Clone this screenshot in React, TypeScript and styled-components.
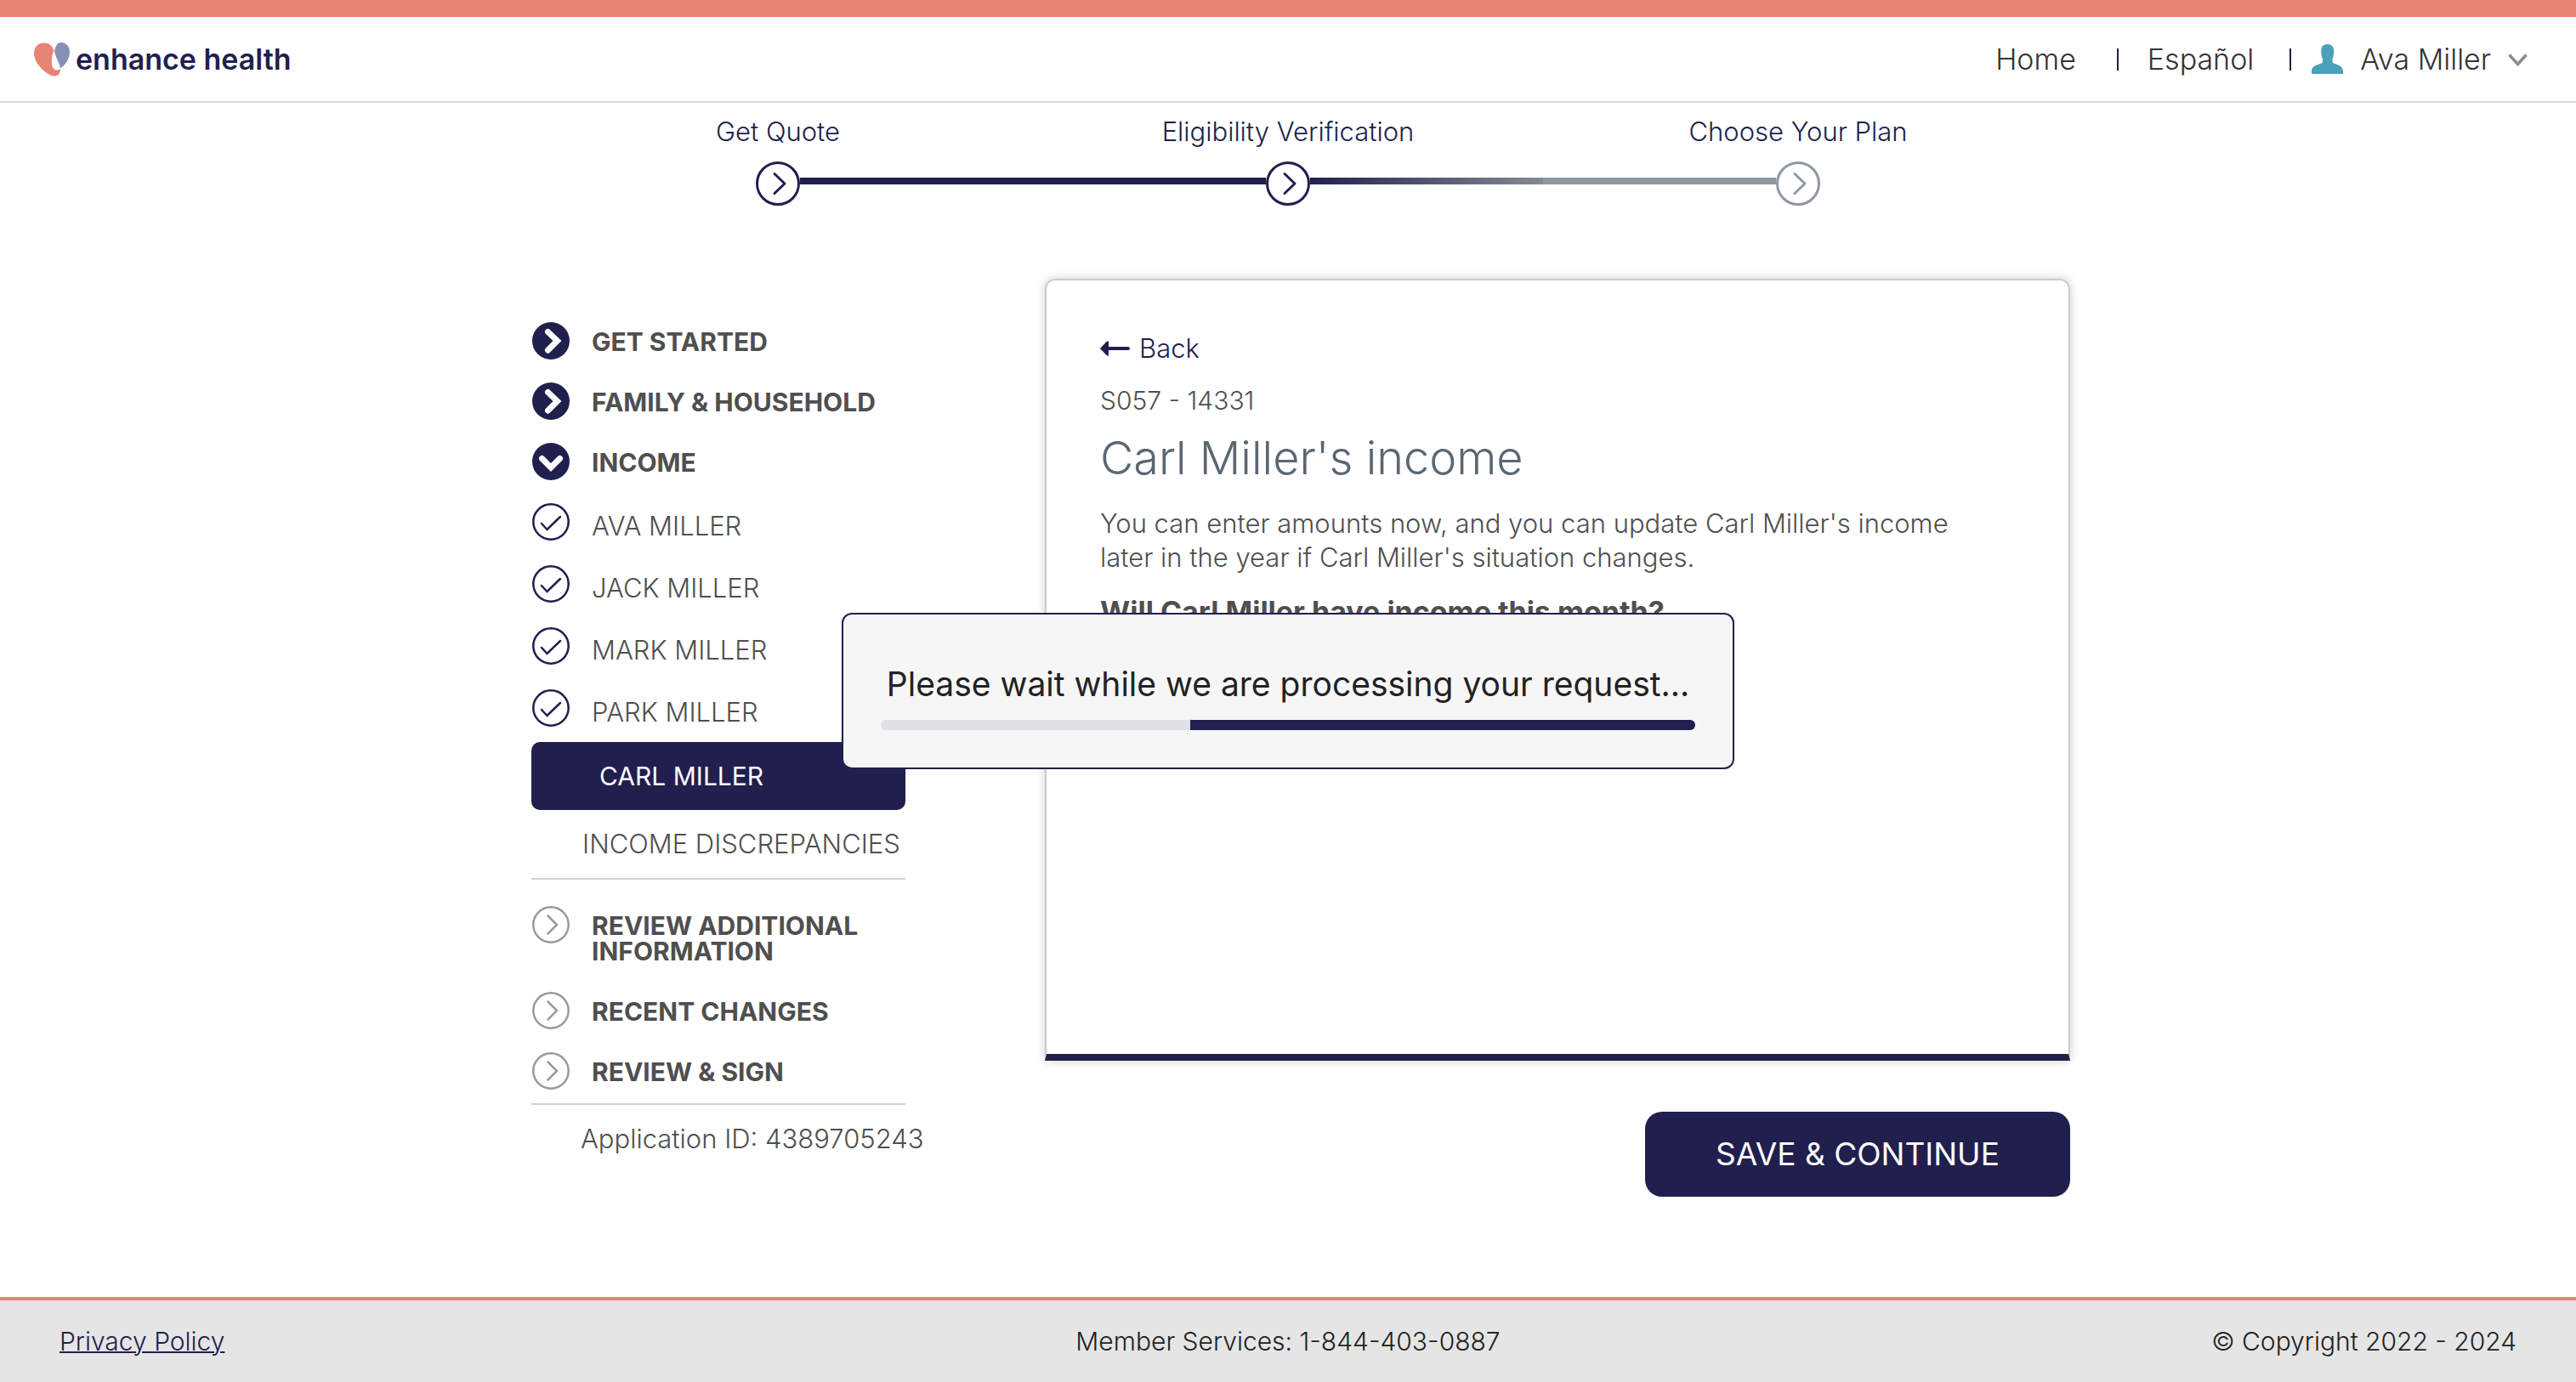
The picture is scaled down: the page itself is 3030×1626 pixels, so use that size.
import React from "react";
import styled, { createGlobalStyle } from "styled-components";

const navy = "#211f4d";
const coral = "#e58572";
const slate = "#8e98a4";
const body = "#4f4f4f";

const GlobalStyle = createGlobalStyle`
  *, *::before, *::after { box-sizing: border-box; }
  body {
    margin: 0;
    background: #fff;
    color: ${body};
    font: 300 31px/40px Inter, "Open Sans", sans-serif;
  }
  a { color: inherit; text-decoration: none; }
  button { font: inherit; cursor: pointer; border: 0; background: none; padding: 0; color: inherit; }
  ul, ol { list-style: none; margin: 0; padding: 0; }
  h1, p { margin: 0; }
  svg { display: block; flex: none; }
`;

const Page = styled.div`
  display: flex;
  flex-direction: column;
  min-height: 100vh;
`;

const Header = styled.header`
  display: flex;
  align-items: center;
  justify-content: space-between;
  border-top: 20px solid ${coral};
  border-bottom: 2px solid #d8d8d8;
  height: 121px;
  padding: 0 57px 0 40px;
`;

const Brand = styled.a`
  display: flex;
  align-items: center;
  gap: 7px;
  color: ${navy};
  font-size: 34px;
  font-weight: 600;
`;

const Nav = styled.nav`
  display: flex;
  align-items: center;
  color: #333;
  font-size: 34px;
`;

const Divider = styled.span`
  width: 2px;
  height: 26px;
  background: ${navy};
  margin: 0 34px 0 48px;
`;

const UserDivider = styled(Divider)`
  margin: 0 24px 0 42px;
`;

const UserButton = styled.button`
  display: flex;
  align-items: center;
  gap: 20px;
`;

const Steps = styled.ol`
  display: grid;
  grid-template-columns: repeat(3, 1fr);
  width: 100%;
  max-width: 1800px;
  margin: 0 auto;
  padding-top: 14px;
  color: ${navy};
`;

const Step = styled.li`
  display: flex;
  flex-direction: column;
  align-items: center;
  gap: 15px;
`;

const Track = styled.div`
  display: grid;
  grid-template-columns: 1fr 52px 1fr;
  align-items: center;
  width: 100%;
`;

const Line = styled.span<{ $fill: string }>`
  height: 8px;
  margin-bottom: 6px;
  background: ${(p) => p.$fill};
`;

const Main = styled.main`
  display: grid;
  grid-template-columns: 440px minmax(0, 1206px);
  justify-content: space-between;
  align-items: start;
  flex: 1;
  width: 100%;
  max-width: 1840px;
  margin: 0 auto;
  padding: 86px 0 60px 30px;
`;

const Sidebar = styled.nav`
  padding-top: 51px;
`;

const Group = styled.ul<{ $gap: number }>`
  display: flex;
  flex-direction: column;
  gap: ${(p) => p.$gap}px;
  padding-bottom: 27px;
`;

const People = styled(Group)`
  padding-bottom: 18px;
`;

const PendingGroup = styled(Group)`
  border-top: 2px solid #d3d3d3;
  border-bottom: 2px solid #d3d3d3;
  padding: 31px 0 16px;
`;

const Section = styled.a`
  display: flex;
  align-items: flex-start;
  gap: 26px;
  font-size: 30px;
  font-weight: 700;
  line-height: 30px;
  text-transform: uppercase;
`;

const SectionLabel = styled.span`
  padding: 8px 0 6px;
`;

const Person = styled.a`
  display: flex;
  align-items: flex-end;
  gap: 26px;
  line-height: 34px;
  text-transform: uppercase;
`;

const CurrentPerson = styled.a`
  display: block;
  border-radius: 10px;
  background: ${navy};
  color: #fff;
  font-size: 30px;
  font-weight: 400;
  line-height: 80px;
  padding-left: 80px;
  text-transform: uppercase;
`;

const PlainItem = styled.a`
  display: block;
  line-height: 80px;
  padding-left: 60px;
  text-transform: uppercase;
  white-space: nowrap;
`;

const ApplicationId = styled.p`
  padding: 20px 0 0 58px;
  white-space: nowrap;
`;

const Content = styled.div`
  display: flex;
  flex-direction: column;
  align-items: flex-end;
  gap: 60px;
`;

const Card = styled.section`
  width: 100%;
  min-height: 920px;
  padding: 60px 63px;
  border: 2px solid #ccc;
  border-bottom: 8px solid ${navy};
  border-radius: 12px 12px 0 0;
  box-shadow: 0 0 12px rgba(0, 0, 0, 0.2);
`;

const BackLink = styled.a`
  display: flex;
  align-items: center;
  gap: 11px;
  width: max-content;
  color: ${navy};
`;

const ScreenCode = styled.p`
  padding-top: 21px;
  font-size: 30px;
`;

const Title = styled.h1`
  padding-top: 18px;
  color: #5b6673;
  font-size: 54px;
  font-weight: 300;
  line-height: 60px;
`;

const Intro = styled.p`
  max-width: 1040px;
  padding-top: 27px;
`;

const Question = styled.p`
  padding-top: 24px;
  font-size: 34px;
  font-weight: 700;
`;

const SaveButton = styled.button`
  width: 500px;
  height: 100px;
  border-radius: 20px;
  background: ${navy};
  color: #fff;
  font-size: 37px;
  font-weight: 400;
`;

const Footer = styled.footer`
  display: grid;
  grid-template-columns: 1fr auto 1fr;
  align-items: center;
  height: 100px;
  padding: 0 70px;
  border-top: 4px solid ${coral};
  background: #e5e5e5;
  color: #222;
  font-size: 30px;
`;

const PrivacyLink = styled.a`
  justify-self: start;
  color: ${navy};
  text-decoration: underline;
  text-decoration-thickness: 2px;
`;

const Copyright = styled.span`
  justify-self: end;
`;

const Dialog = styled.div`
  position: fixed;
  top: 50%;
  left: 50%;
  transform: translate(-50%, -50%);
  width: 1050px;
  max-width: 100%;
  padding: 58px 44px 44px;
  border: 2px solid ${navy};
  border-radius: 12px;
  background: #f6f6f6;
  color: #222;
  text-align: center;
  font-size: 39px;
  font-weight: 400;
  line-height: 48px;
  white-space: nowrap;
`;

const Bar = styled.div`
  display: flex;
  justify-content: flex-end;
  height: 12px;
  margin-top: 18px;
  border-radius: 6px;
  overflow: hidden;
  background: #dee1e5;
`;

const BarFill = styled.div`
  width: 62%;
  background: ${navy};
`;

function HeartLogo() {
  return (
    <svg width="42" height="40" viewBox="0 0 42 40" aria-hidden="true">
      <path
        fill={coral}
        d="M0 13C0 5 5 .5 12.500 .5 18 .5 21.500 4 23.500 10 21 14 20.800 18 20.800 23 20.800 29 23.500 32.500 27 32.500 29 32.500 29.500 31.500 30.800 31 31.300 35.500 29 39.500 24 39.500 17 39.500 0 26 0 13Z"
      />
      <path
        fill="#878fb4"
        d="M24 10C25.500 4.500 27 0 31.500 0 37.500 0 42 4 42 11.500 42 19 37 26 31.200 30.500 29.500 23 25.500 18 24 10Z"
      />
    </svg>
  );
}

function PersonIcon() {
  return (
    <svg width="37" height="35" viewBox="0 0 37 35" aria-hidden="true">
      <path
        fill="#4ba1bb"
        d="M18.500 0C23.500 0 26.500 3 26.200 8 26 13 25.500 15.500 24.500 17.500V21C25.500 24 37 23.500 37 32V35H0V32C0 23.500 12 24 13 21V17.500C12 15.500 11.300 13 11.200 8 11 3 14 0 18.500 0Z"
      />
    </svg>
  );
}

function CaretDown() {
  return (
    <svg width="23" height="16" viewBox="0 0 23 16" aria-hidden="true">
      <path d="M1.500 2.500 11.500 13.500 21.500 2.500" fill="none" stroke="#8c8c8c" strokeWidth="3.500" />
    </svg>
  );
}

function StepCircle({ color }: { color: string }) {
  return (
    <svg width="52" height="52" viewBox="0 0 52 52" fill="none" stroke={color} strokeWidth="3" aria-hidden="true">
      <circle cx="26" cy="26" r="24.500" />
      <path d="M22 14.500 34 26 22 37.500" strokeLinecap="round" strokeLinejoin="round" />
    </svg>
  );
}

type Mark = "open" | "closed" | "pending" | "done";

function MarkIcon({ mark }: { mark: Mark }) {
  if (mark === "open" || mark === "closed") {
    return (
      <svg width="45" height="44" viewBox="-1 0 45 44" fill="none" aria-hidden="true">
        <circle cx="22" cy="22" r="22" fill={navy} />
        <path
          d={mark === "open" ? "M11.500 18.500 22 29 32.500 18.500" : "M18.500 11.500 29.500 22 18.500 33"}
          stroke="#fff"
          strokeWidth="7"
          strokeLinecap="round"
        />
      </svg>
    );
  }
  return (
    <svg
      width="45"
      height="44"
      viewBox="-1 0 45 44"
      fill="none"
      stroke={mark === "done" ? navy : "#9a9a9a"}
      strokeWidth="2.500"
      strokeLinecap="round"
      aria-hidden="true"
    >
      <circle cx="22" cy="22" r="20.700" />
      <path d={mark === "done" ? "M11 24 17.500 31 33 16" : "M18.500 11.500 29 22 18.500 32.500"} />
    </svg>
  );
}

function BackArrow() {
  return (
    <svg width="35" height="18" viewBox="0 0 35 18" fill={navy} aria-hidden="true">
      <path d="M0 9 7.500 1Q10 -1 10 2V7H33Q35 7 35 9T33 11H10V16Q10 19 7.500 17Z" />
    </svg>
  );
}

const steps = [
  { label: "Get Quote", color: navy, before: "transparent", after: navy },
  { label: "Eligibility Verification", color: navy, before: navy, after: `linear-gradient(90deg, ${navy}, #848b94)` },
  { label: "Choose Your Plan", color: slate, before: slate, after: "transparent" },
];

const startedSections: { label: string; mark: Mark }[] = [
  { label: "Get Started", mark: "closed" },
  { label: "Family & Household", mark: "closed" },
  { label: "Income", mark: "open" },
];

const people = ["Ava Miller", "Jack Miller", "Mark Miller", "Park Miller"];

const pendingSections = ["Review Additional Information", "Recent Changes", "Review & Sign"];

function SectionItem({ label, mark }: { label: string; mark: Mark }) {
  return (
    <li>
      <Section href="#">
        <MarkIcon mark={mark} />
        <SectionLabel>{label}</SectionLabel>
      </Section>
    </li>
  );
}

export default function App() {
  return (
    <Page>
      <GlobalStyle />
      <Header>
        <Brand href="#">
          <HeartLogo />
          enhance health
        </Brand>
        <Nav>
          <a href="#">Home</a>
          <Divider />
          <a href="#">Español</a>
          <UserDivider />
          <UserButton type="button">
            <PersonIcon />
            Ava Miller
            <CaretDown />
          </UserButton>
        </Nav>
      </Header>

      <Steps>
        {steps.map((s) => (
          <Step key={s.label}>
            {s.label}
            <Track>
              <Line $fill={s.before} />
              <StepCircle color={s.color} />
              <Line $fill={s.after} />
            </Track>
          </Step>
        ))}
      </Steps>

      <Main>
        <Sidebar aria-label="Application sections">
          <Group $gap={27}>
            {startedSections.map((s) => (
              <SectionItem key={s.label} {...s} />
            ))}
          </Group>
          <People $gap={29}>
            {people.map((name) => (
              <li key={name}>
                <Person href="#">
                  <MarkIcon mark="done" />
                  {name}
                </Person>
              </li>
            ))}
          </People>
          <CurrentPerson href="#" aria-current="page">
            Carl Miller
          </CurrentPerson>
          <PlainItem href="#">Income Discrepancies</PlainItem>
          <PendingGroup $gap={27}>
            {pendingSections.map((label) => (
              <SectionItem key={label} label={label} mark="pending" />
            ))}
          </PendingGroup>
          <ApplicationId>Application ID: 4389705243</ApplicationId>
        </Sidebar>

        <Content>
          <Card>
            <BackLink href="#">
              <BackArrow />
              Back
            </BackLink>
            <ScreenCode>S057 - 14331</ScreenCode>
            <Title>Carl Miller's income</Title>
            <Intro>
              You can enter amounts now, and you can update Carl Miller's income later in the year if Carl
              Miller's situation changes.
            </Intro>
            <Question>Will Carl Miller have income this month?</Question>
          </Card>
          <SaveButton type="button">SAVE &amp; CONTINUE</SaveButton>
        </Content>
      </Main>

      <Footer>
        <PrivacyLink href="#">Privacy Policy</PrivacyLink>
        <span>Member Services: 1-844-403-0887</span>
        <Copyright>© Copyright 2022 - 2024</Copyright>
      </Footer>

      <Dialog role="dialog" aria-labelledby="wait-message">
        <p id="wait-message">Please wait while we are processing your request...</p>
        <Bar role="progressbar" aria-label="Processing">
          <BarFill />
        </Bar>
      </Dialog>
    </Page>
  );
}
